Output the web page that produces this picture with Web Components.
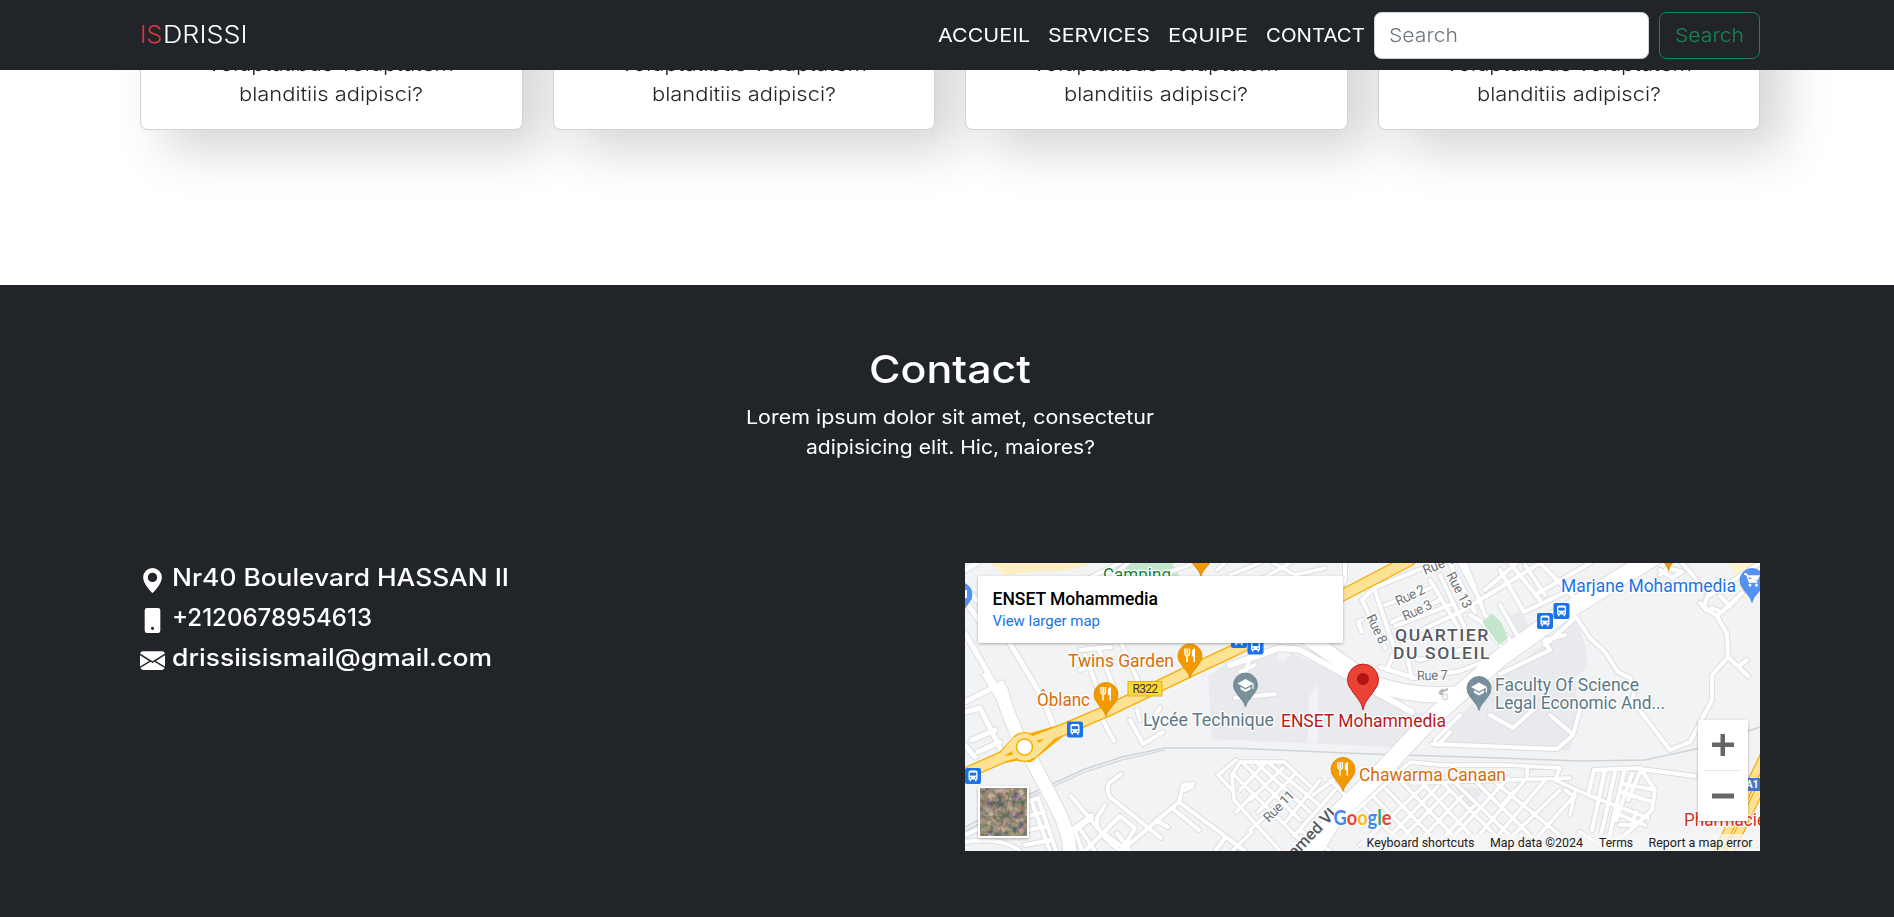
<!DOCTYPE html>
<html lang="fr">
<head>
<meta charset="utf-8">
<title>ISDRISSI</title>
<style>
  html, body { margin: 0; height: 100%; overflow: hidden; }
  body { background: #fff; color: #212529; font: 300 19.3px/30px Inter, "Open Sans", sans-serif; }
</style>
</head>
<body>
<site-page></site-page>
<script>
// Text line whose letters are widened to a given width.
customElements.define('fit-text', class extends HTMLElement {
  connectedCallback() {
    if (this.shadowRoot) return;
    const w = Number(this.getAttribute('w'));
    this.attachShadow({ mode: 'open' }).innerHTML =
      `<style>:host{display:inline-block;white-space:nowrap;text-align:left;width:${w}px;vertical-align:top}span{display:inline-block;transform-origin:0 50%;vertical-align:top}</style><span><slot></slot></span>`;
    const span = this.shadowRoot.querySelector('span');
    span.style.transform = `scaleX(${w / span.getBoundingClientRect().width})`;
  }
});

customElements.define('nav-bar', class extends HTMLElement {
  constructor() {
    super();
    this.attachShadow({ mode: 'open' }).innerHTML = `<style>
      :host{display:flex;align-items:center;height:70px;box-sizing:border-box;padding:0 134px 0 140px;background:#212529;color:#fff;position:relative;z-index:2}
      .brand{font-size:24.5px;font-weight:300;margin-right:auto;display:flex;padding-bottom:2px}
      .brand b{color:#dc3545;font-weight:300}
      nav{display:flex;gap:18px;font-weight:400;margin-right:9px}
      .field{box-sizing:border-box;width:275px;height:47px;border:1px solid #ced4da;border-radius:7.5px;background:#fff;color:#6c757d;padding:7.5px 14px;margin-right:10px}
      button{all:unset;box-sizing:border-box;width:101px;height:47px;border:1px solid #198754;border-radius:7.5px;color:#198754;text-align:center}
    </style>
    <div class="brand"><b><fit-text w="22.5">IS</fit-text></b><fit-text w="84.5">DRISSI</fit-text></div>
    <nav><fit-text w="92">ACCUEIL</fit-text><fit-text w="102">SERVICES</fit-text><fit-text w="80">EQUIPE</fit-text><fit-text w="99">CONTACT</fit-text></nav>
    <div class="field"><fit-text w="69">Search</fit-text></div>
    <button><fit-text w="69">Search</fit-text></button>`;
  }
});

customElements.define('team-card', class extends HTMLElement {
  constructor() {
    super();
    this.attachShadow({ mode: 'open' }).innerHTML = `<style>
      :host{display:block;box-sizing:border-box;height:130px;padding:48px 20px 0;text-align:center;background:#fff;border:1px solid rgba(0,0,0,.175);border-radius:7.5px;box-shadow:24px 20px 50px rgba(0,0,0,.17)}
      ::slotted(*){display:block;height:30px}
    </style><slot></slot>`;
  }
});

const ICONS = {
  geo: '<path d="M8 16s6-5.686 6-10A6 6 0 0 0 2 6c0 4.314 6 10 6 10m0-7a3 3 0 1 1 0-6 3 3 0 0 1 0 6"/>',
  phone: '<path d="M3 1.500a1.500 1.500 0 0 1 1.500-1.500h7a1.500 1.500 0 0 1 1.500 1.500v13a1.500 1.500 0 0 1-1.500 1.500h-7a1.500 1.500 0 0 1-1.500-1.500zm6 11.500a1 1 0 1 0-2 0 1 1 0 0 0 2 0"/>',
  mail: '<path d="M.05 3.555A2 2 0 0 1 2 2h12a2 2 0 0 1 1.950 1.555L8 8.414zM0 4.697v7.104l5.803-3.558zM6.761 8.830l-6.570 4.027A2 2 0 0 0 2 14h12a2 2 0 0 0 1.808-1.144l-6.570-4.027L8 9.586zm3.436-.586L16 11.801V4.697z"/>'
};
customElements.define('contact-line', class extends HTMLElement {
  constructor() {
    super();
    this.attachShadow({ mode: 'open' }).innerHTML = `<style>
      :host{display:flex;align-items:flex-start;gap:7px;height:40px;font-size:24px;font-weight:500;color:#fff}
      svg{width:25px;height:25px;margin:5px 0 0 -.5px;fill:#fff;flex:none}
    </style><svg viewBox="0 0 16 16"></svg><slot></slot>`;
  }
  connectedCallback() { this.shadowRoot.querySelector('svg').innerHTML = ICONS[this.getAttribute('icon')]; }
});

// Streets: [white width, path]
const streets = [
  // west side
  [5,'M965 570L977 563M965 588L985 608M965 600L992 640M965 633L998 690L1018 738M1008 640L1042 697L1054 727M965 702L1002 683M985 675L1000 700M965 712L980 708L1002 752M972 740L995 730M978 752L1000 742M965 745L975 757'],
  [4,'M1080 650L1111 647M1085 655L1098 690M1098 647L1115 690M1120 640L1142 690M1080 670L1100 664M1130 720L1143 744L1163 732M1150 722L1160 708M1101 717L1114 741M1137 710L1140 720'],
  [4,'M1031 800L1050 851M1038 798L1056 851M1020 805L1038 798M1013 820L1044 812M1018 832L1048 826M1025 845L1052 840'],
  [4,'M965 835L985 826M965 842Q1000 836 1020 851'],
  // south centre
  [4,'M1121 774L1109 783Q1106 790 1110 797L1161 838M1071 796L1112 845M1076 830L1092 818M1078 826L1095 851M1092 815L1074 828L1082 851M1105 805L1097 818V828L1128 851M1085 851L1120 816L1135 828L1125 845M1105 838L1120 851M1117 833L1130 851M1121 851L1179 802L1183 785L1193 784M1179 802L1245 851M1172 808L1199 830M1156 820L1168 827M1225 838L1216 850M1185 790L1192 787'],
  [3.5,'M1240 762H1284L1310 786M1240 762L1232 775L1234 800L1280 851M1234 775L1280 820L1300 840M1244 764L1300 820M1258 764L1310 812M1270 764L1318 804M1240 790L1266 762M1250 800L1283 768M1236 812L1252 796M1258 812L1295 774M1284 824L1320 780M1294 836L1335 790M1313 795L1340 775M1218 775L1236 760M1218 775L1232 790M1250 830L1270 812M1232 851L1252 832M1300 830L1330 851M1330 780L1344 794'],
  [3.5,'M1346 820L1410 762L1440 765H1505M1365 808L1410 851M1375 798L1425 851M1386 789L1440 845M1398 778L1462 845M1412 772L1480 845M1425 785L1360 845M1438 786L1376 851M1450 790L1400 840M1462 796L1416 845M1474 806L1436 845M1390 765L1412 783L1570 778M1506 765L1560 768L1555 780L1595 798M1575 792L1570 815M1435 775L1500 840M1450 778L1520 845M1472 778L1540 845M1490 778L1566 840M1508 778L1455 835M1525 780L1475 840M1545 780L1490 845M1560 790L1508 840M1575 795L1530 845M1575 797L1565 790M1502 805L1515 790M1527 766V778'],
  [4,'M1594 770L1640 768L1655 790L1652 810L1625 835L1600 845L1580 832M1594 770L1588 795L1648 818M1605 770L1592 830M1615 772L1600 840M1624 772L1608 842M1632 774L1616 820M1640 772L1628 800M1622 792L1652 802M1624 784L1655 790M1620 815L1645 825M1620 825L1632 825L1636 812M1640 769L1695 776'],
  // campus and faculty
  [4,'M1235 698L1275 694M1240 672L1255 665M1250 657L1240 690M1380 667L1415 678L1460 671L1500 655M1412 678L1408 660M1387 670L1393 655'],
  [4,'M1435 740L1460 715M1432 744L1557 749L1573 735L1580 710M1438 745L1450 732M1490 715L1513 728L1535 708M1550 715L1570 732M1545 640L1565 635M1544 641L1550 650L1500 674M1545 645L1576 617L1590 638L1605 652L1618 672L1630 678L1635 690L1632 700L1670 750L1690 742L1712 700V675L1728 657L1727 634L1717 616L1704 607L1707 597L1718 590L1760 563'],
  [4,'M1728 657L1748 676M1740 665L1747 660M1717 616L1742 593M1712 608L1722 612L1736 600M1720 596L1730 606M1706 610L1700 603M1660 575L1668 568L1682 572L1672 578L1660 570M1682 563L1710 595'],
  // north quarter
  [4,'M1345 563V580L1340 590M1362 600L1374 588L1435 563M1374 588L1395 650L1420 660L1460 650M1362 600L1385 648M1362 620L1358 622L1362 632M1385 605L1430 588M1392 622L1440 600M1395 626L1450 605M1400 640L1460 612L1480 600M1430 580L1460 630M1440 575L1465 628M1450 563L1475 612M1460 563L1480 600L1540 563M1465 563L1485 615L1515 645M1485 590L1520 560M1500 570L1524 612L1570 590M1510 563L1540 600M1525 565L1545 595M1540 563L1575 598M1535 595L1590 563M1500 605L1520 640M1470 615L1482 622L1500 645'],
  [3.5,'M1085 580L1120 563M1105 583L1128 563M1273 563L1295 575L1325 568M1260 580L1290 563M1230 575L1260 563M1160 575L1190 565M1217 570L1225 563']
];
const avenues = [
  [13,'M1001 690Q1012 730 1030 757L1058 810Q1070 835 1070 855'],
  [6,'M1230 665L1280 648L1300 650L1345 675L1412 712'],
  [15,'M1305 636L1370 682Q1410 698 1455 694'],
  [17,'M1308 860L1335 816L1377 776L1430 720L1500 658L1560 615L1660 553']
];
const pinPath = (r, h) => `M0 ${h}C-1.500 ${h*.72} ${-r*.4} ${r*1.250} ${-r*.75} ${r*.7}A${r} ${r} 0 1 1 ${r*.75} ${r*.7}C${r*.4} ${r*1.250} 1.500 ${h*.72} 0 ${h}Z`;
const fork = '<path d="M-5-7V-2Q-5 0-3 .500V6.500M-2.800-7V-1M-.600-7V-2Q-.600 0-3 .500" fill="none" stroke="#fff" stroke-width="1.500"/><path d="M5-7V6.500H3.500V1H1.800V-4Q2.500-7 5-7Z" fill="#fff"/>';
const cap = '<path d="M-8-1L0-5.500L8-1L0 3.500ZM-5 2.200L0 5L5 2.200V4.700L0 7.500L-5 4.700ZM6.800-.500H8V4.500H6.800Z" fill="#fff"/>';
const cart = '<path d="M-8-6H-5.500L-2.500 2H5.500M-4.700-4H7L5-.300H-3.300Z" fill="#fff" stroke="#fff" stroke-width="1.400"/><circle cx="-2" cy="5" r="1.500" fill="#fff"/><circle cx="4.500" cy="5" r="1.500" fill="#fff"/>';
const pin = (x, y, color, edge, glyph) => `<g transform="translate(${x} ${y})"><path d="${pinPath(12,22.5)}" fill="${color}" stroke="${edge}" stroke-width=".8"/>${glyph}</g>`;
const bus = (x, y) => `<g transform="translate(${x} ${y})"><rect x="-8" y="-8" width="16" height="16" rx="2" fill="#1a73e8"/><path d="M-4.500-3.500Q-4.500-5.500-2.500-5.500H2.500Q4.500-5.500 4.500-3.500V3.500H3.500V5.300H2V3.500H-2V5.300H-3.500V3.500H-4.500Z" fill="#fff"/><path d="M-3.200-3.400H3.200V-.400H-3.200Z" fill="#1a73e8"/><circle cx="-2.500" cy="1.700" r=".8" fill="#1a73e8"/><circle cx="2.500" cy="1.700" r=".8" fill="#1a73e8"/></g>`;
const label = (x, y, w, color, text, extra = '') => `<text x="${x}" y="${y}" textLength="${w}" lengthAdjust="spacingAndGlyphs" fill="${color}" ${extra}>${text}</text>`;
const street = (x, y, a, text, w) => `<text transform="translate(${x} ${y}) rotate(${a})" textLength="${w}" fill="#6b7075" font-size="13.500">${text}</text>`;

customElements.define('city-map', class extends HTMLElement {
  constructor() {
    super();
    const all = [...streets, ...avenues];
    this.attachShadow({ mode: 'open' }).innerHTML = `<style>
      :host{display:block;width:795px;height:288px;overflow:hidden;font-family:Roboto,sans-serif}
      svg{display:block;width:795px;height:288px}
      .roads path{fill:none;stroke-linejoin:round;stroke-linecap:round}
      .labels text{paint-order:stroke;stroke:#fff;stroke-width:2.500px;stroke-linejoin:round;font-weight:400}
      text{font-family:Roboto,sans-serif;font-weight:400}
    </style>
    <svg viewBox="965 563 795 288">
      <defs>
        <filter id="sh" x="-20%" y="-20%" width="140%" height="150%"><feDropShadow dx="0" dy="1" stdDeviation="1.500" flood-opacity=".3"/></filter>
        <filter id="sat" x="0" y="0" width="100%" height="100%" color-interpolation-filters="sRGB"><feTurbulence type="fractalNoise" baseFrequency=".16" numOctaves="4" seed="8"/><feColorMatrix values=".8 0 0 0 .17  .5 .3 0 0 .13  .4 0 .4 0 .07  0 0 0 0 1"/></filter>
      </defs>
      <rect x="965" y="563" width="795" height="288" fill="#f1f3f4"/>
      <path d="M990 563H1090Q1070 573 1045 571L1005 575Z" fill="#fdefc3"/>
      <path d="M1120 563H1172L1180 578H1110Z" fill="#c3e6cd"/>
      <path d="M1730 563H1760V580L1745 600L1738 585Z" fill="#fdf3d0"/>
      <path d="M1208 676L1225 665L1285 650L1340 675L1415 712L1445 716L1405 744L1390 747L1212 739Z" fill="#e8eaed"/>
      <path d="M1277 660L1280 649L1293 651L1285 661ZM1309 710V697L1318 684V742L1307 743Z" fill="#f1f3f4"/>
      <path d="M1505 618L1520 611L1532 630L1515 642ZM1520 663L1574 620Q1590 645 1586 668L1575 678L1580 718L1570 750L1435 746L1460 718L1500 672Z" fill="#e8eaed"/>
      <path d="M1455 788H1485L1470 807Z" fill="#e8eaed"/>
      <path d="M965 827L1030 794L1085 769L1122 757L1165 748H1230L1370 754L1500 758L1580 761L1645 760L1700 748L1760 727" fill="none" stroke="#d0d3d6" stroke-width="1.500"/>
      <path d="M965 831L1030 797L1085 772L1122 760L1165 750" fill="none" stroke="#d0d3d6" stroke-width="1.200"/>
      <g class="roads">
        ${all.map(([w, d]) => `<path d="${d}" stroke="#dcdee1" stroke-width="${w + 2}"/>`).join('')}
        ${all.map(([w, d]) => `<path d="${d}" stroke="#fff" stroke-width="${w}"/>`).join('')}
        <path d="M960 776L1003 757L1019 754M1019 740L1003 757M1029 740L1060 731L1107 711L1190 671L1235 650L1343 595L1410 560M1029 756L1060 731" stroke="#f9ab00" stroke-width="12.500"/>
        <circle cx="1024.500" cy="747" r="15" fill="#f9ab00"/>
        <path d="M960 776L1003 757L1019 752M1029 743L1060 731L1107 711L1190 671L1235 650L1343 595L1410 560M1005 755L1016 742M1033 753L1050 736" stroke="#fde293" stroke-width="10"/>
        <circle cx="1024.500" cy="747" r="13.700" fill="#fde293"/>
        <circle cx="1024.500" cy="747" r="8" fill="#fff" stroke="#f9ab00" stroke-width="1.500"/>
        <path style="fill:#f9ab00" d="M1004 756L1012 751L1013 755ZM1037 740L1044 739L1039 743Z"/>
        <path d="M1720 860L1768 760" stroke="#f9ab00" stroke-width="20"/><path d="M1720 860L1768 760" stroke="#fde293" stroke-width="17.500"/>
        <path d="M1720 860L1768 760" stroke="#f9ab00" stroke-width="3.500"/><path d="M1720 860L1768 760" stroke="#fff" stroke-width="1"/>
      </g>
      <path d="M1482 622L1492 613.500L1501 622L1508 638L1499 645Z" fill="#c3e6cd"/>
      <path d="M1439 693L1448 689M1439 693L1443 689M1439 693L1444 695" stroke="#b4b9bd" stroke-width="2" fill="none"/><circle cx="1445" cy="697" r="3" fill="#f1f3f4" stroke="#d0d3d6"/>
      ${bus(1239,640)}${bus(1255.5,646.5)}${bus(1545,621)}${bus(1561.5,611)}${bus(1075,729.5)}${bus(973,776)}
      <rect x="1128" y="681.500" width="34" height="14.500" fill="#fdd835" stroke="#d9b621"/>
      <text x="1132.500" y="693" textLength="25.500" font-size="12" fill="#3c3a2a">R322</text>
      <rect x="1744" y="778" width="16" height="13" fill="#3f78c9"/><text x="1746" y="788" font-size="10" fill="#fff" style="font-weight:700">A1</text>
      ${pin(1201,554,'#f29900','#d98200',fork)}${pin(1668.5,548,'#f29900','#d98200',fork)}
      ${pin(1190,655.5,'#f29900','#e08a00',fork)}${pin(1106,694,'#f29900','#e08a00',fork)}${pin(1343,769,'#f29900','#e08a00',fork)}
      ${pin(1245.5,684.5,'#78909c','#688390',cap)}${pin(1479,688,'#78909c','#688390',cap)}
      ${pin(1752,580,'#5491f5','#4383ec',cart)}${pin(960,594,'#5491f5','#4383ec','<path d="M4-4h3v8h-3z" fill="#fff"/>')}
      <g transform="translate(1363 679)"><path d="${pinPath(15.5,31)}" fill="#ea4335" stroke="#c5221f"/><circle r="6" fill="#b31412"/></g>
      <g class="labels" font-size="17.500">
        ${label(1103,581,68,'#188038','Camping')}
        ${label(1561,592,175,'#1a73e8','Marjane Mohammedia')}
        ${label(1068,667,106,'#d56e0c','Twins Garden')}
        ${label(1037,706,53,'#d56e0c','Ôblanc')}
        <g font-size="16.500" letter-spacing="1.500">${label(1395,641,95,'#55595e','QUARTIER','style="font-weight:500"')}
        ${label(1393,658.5,98,'#55595e','DU SOLEIL','style="font-weight:500"')}</g>
        ${label(1143,726,131,'#5c7885','Lycée Technique')}
        ${label(1281,727,165,'#b8191c','ENSET Mohammedia')}
        ${label(1495,691,144,'#5c7885','Faculty Of Science')}
        ${label(1495,708.5,170,'#5c7885','Legal Economic And...')}
        ${label(1359,781,147,'#d56e0c','Chawarma Canaan')}
        ${label(1684,826,82,'#d93025','Pharmacie')}
        ${street(1425,575,-22,'Rue 1',33)}${street(1398,606,-25,'Rue 2',31)}${street(1405,621,-25,'Rue 3',31)}
        ${street(1366,617,64,'Rue 8',31)}${street(1446,575,62,'Rue 13',39)}${street(1417,680.5,-2,'Rue 7',31)}${street(1269,823,-46,'Rue 11',38)}
        <text transform="translate(1272 882) rotate(-46)" font-size="16.500" fill="#55595e" style="font-weight:500">Mohamed VI</text>
      </g>
      <text x="1333.500" y="824.500" textLength="58" lengthAdjust="spacingAndGlyphs" font-size="20" style="font-family:Lato,sans-serif;font-weight:700;paint-order:stroke;stroke:#fff;stroke-width:1.500px"><tspan fill="#4285f4">G</tspan><tspan fill="#ea4335">o</tspan><tspan fill="#fbbc04">o</tspan><tspan fill="#4285f4">g</tspan><tspan fill="#34a853">l</tspan><tspan fill="#ea4335">e</tspan></text>
      <rect x="1362" y="834" width="398" height="17" fill="#f5f5f5" opacity=".75"/>
      <g font-size="12.800">${label(1366.5,847,108,'#202124','Keyboard shortcuts')}${label(1490,847,93,'#202124','Map data ©2024')}${label(1599,847,34,'#202124','Terms')}${label(1648.5,847,104,'#202124','Report a map error')}</g>
      <rect x="978" y="576" width="365" height="67" rx="2" fill="#fff" filter="url(#sh)"/>
      ${label(992.5,605,165.5,'#000','ENSET Mohammedia','font-size="17.500" style="font-weight:500"')}
      ${label(992.5,626,107.5,'#1a73e8','View larger map','font-size="15.500"')}
      <rect x="978" y="786" width="51" height="52" rx="2" fill="#fff" filter="url(#sh)"/>
      <rect x="980" y="788" width="47" height="48" fill="#8f887a" filter="url(#sat)"/>
      <path d="M980 817H1027M1011 788L999 836M980 794L1000 812L1027 830" stroke="#655e50" stroke-width="1" opacity=".5" fill="none"/><path d="M995 806L1000 797L1003 804L998 809Z" fill="#3f5560" opacity=".6"/>
      <rect x="1698" y="720" width="50" height="101" rx="2" fill="#fff" filter="url(#sh)"/>
      <path d="M1704 770.500H1741" stroke="#e6e6e6"/>
      <path d="M1712 742.500H1720.500V734H1725V742.500H1734V747H1725V756H1720.500V747H1712ZM1712 793.500H1734V798.500H1712Z" fill="#666"/>
    </svg>`;
  }
});

customElements.define('site-page', class extends HTMLElement {
  constructor() {
    super();
    const card = '<team-card><div><fit-text w="246">voluptatibus voluptatem</fit-text></div><div><fit-text w="184">blanditiis adipisci?</fit-text></div></team-card>';
    this.attachShadow({ mode: 'open' }).innerHTML = `<style>
      :host{display:block}
      .team{display:grid;grid-template-columns:repeat(4,1fr);gap:30px;align-items:end;height:285px;margin-top:-70px;padding:0 134px 155px 140px;box-sizing:border-box;overflow:hidden}
      .contact{background:#212529;color:#fff;height:632px;box-sizing:border-box;padding:60px 134px 0 140px;font-weight:400}
      header{text-align:center;height:218px}
      h2{margin:0 0 9px;font-size:38.500px;font-weight:500;line-height:48px}
      header div{height:30px}
      .cols{display:grid;grid-template-columns:1fr 795px;gap:30px}
    </style>
    <nav-bar></nav-bar>
    <section class="team">${card.repeat(4)}</section>
    <section class="contact">
      <header><h2><fit-text w="162">Contact</fit-text></h2>
        <div><fit-text w="408">Lorem ipsum dolor sit amet, consectetur</fit-text></div>
        <div><fit-text w="289">adipisicing elit. Hic, maiores?</fit-text></div></header>
      <div class="cols">
        <div>
          <contact-line icon="geo"><fit-text w="337">Nr40 Boulevard HASSAN II</fit-text></contact-line>
          <contact-line icon="phone"><fit-text w="200">+2120678954613</fit-text></contact-line>
          <contact-line icon="mail"><fit-text w="320">drissiisismail@gmail.com</fit-text></contact-line>
        </div>
        <city-map></city-map>
      </div>
    </section>`;
  }
});
</script>
</body>
</html>
